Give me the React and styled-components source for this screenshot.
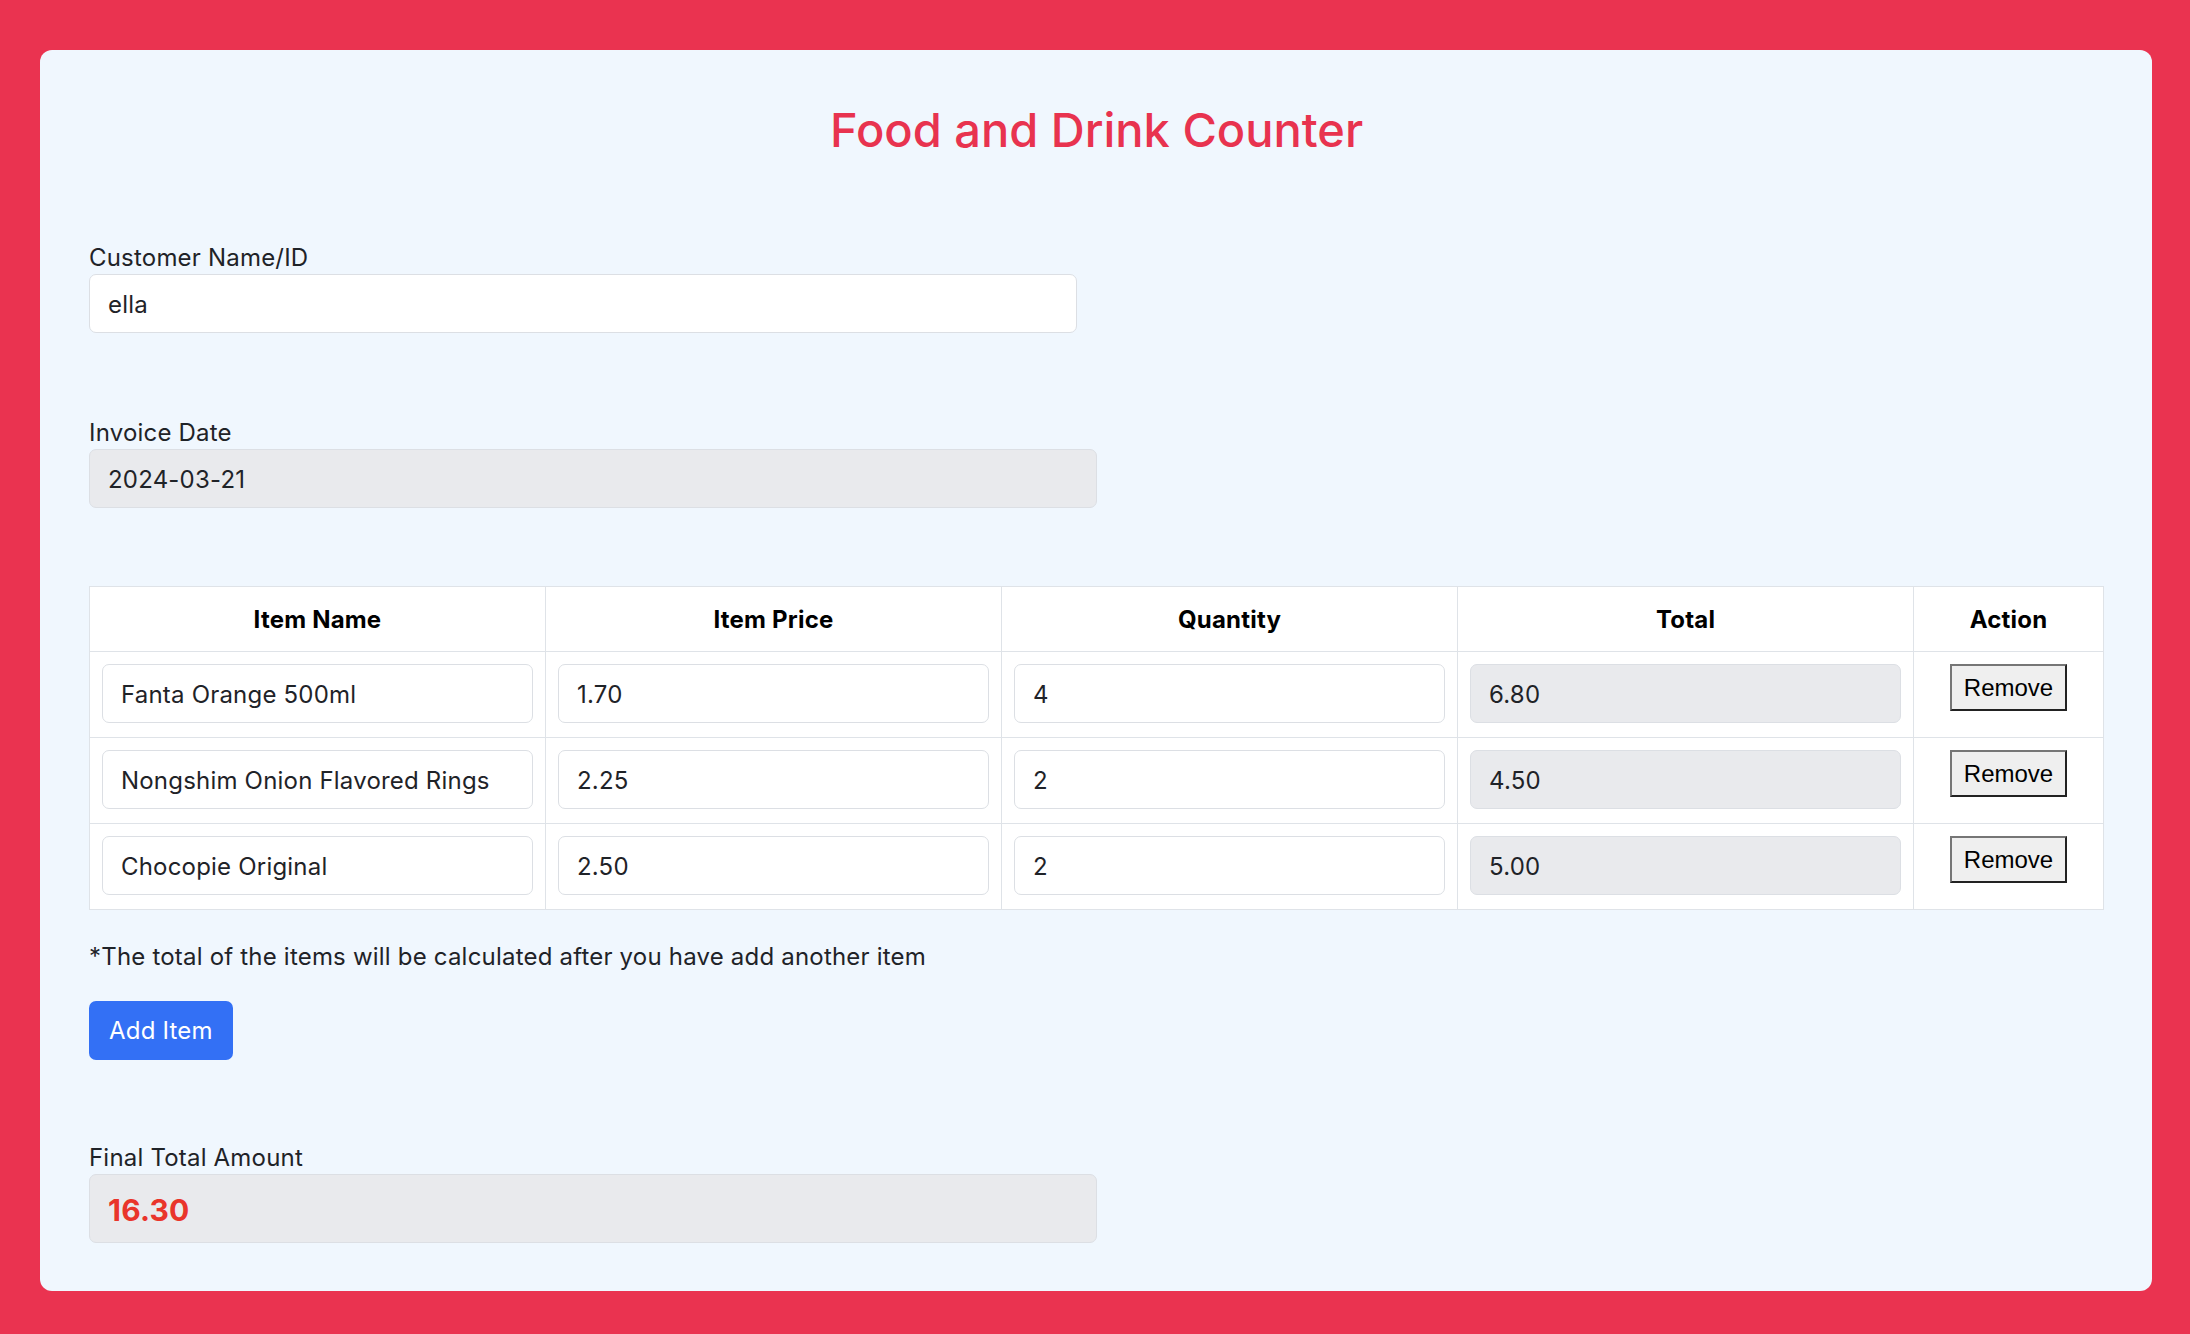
import React, { useState } from 'react'
import styled, { createGlobalStyle } from 'styled-components'

const GlobalStyle = createGlobalStyle`
  html, body {
    margin: 0;
    padding: 0;
    background: #EA3350;
  }
  body {
    font-family: Inter, "Noto Sans", "Liberation Sans", sans-serif;
    color: #1f2328;
  }
  * { box-sizing: border-box; }
`

const Page = styled.div`
  min-height: 1334px;
  padding: 50px 38px 43px 40px;
`

const Card = styled.div`
  background: #F0F7FE;
  border-radius: 12px;
  padding: 48px 48px 48px 49px;
`

const Title = styled.h1`
  margin: 0 0 79px;
  text-align: center;
  color: #E8334F;
  font-size: 47px;
  font-weight: 500;
  line-height: 64px;
`

const Field = styled.div`
  margin-bottom: ${p => p.gap || 0}px;
`

const Label = styled.label`
  display: block;
  font-size: 24px;
  letter-spacing: 0.2px;
  line-height: 33px;
  color: #1f2328;
`

const TextInput = styled.input`
  display: block;
  width: ${p => p.w || '100%'};
  height: ${p => (p.big ? 69 : 59)}px;
  padding: 2px 18px 0;
  border: 1px solid #dcdfe4;
  border-radius: 7px;
  background: ${p => (p.disabled ? '#e9eaed' : '#ffffff')};
  font-family: Inter, "Noto Sans", sans-serif;
  font-size: ${p => (p.big ? 30 : 24)}px;
  letter-spacing: 0.2px;
  font-weight: ${p => (p.big ? 700 : 400)};
  color: ${p => (p.big ? '#E9352B' : '#1f2328')};
  outline: none;
  &:disabled { opacity: 1; -webkit-text-fill-color: ${p => (p.big ? '#E9352B' : '#1f2328')}; }
`

const Table = styled.table`
  width: 100%;
  border-collapse: collapse;
  table-layout: fixed;
  background: #ffffff;
  margin-bottom: 30px;
`

const Th = styled.th`
  border: 1px solid #dfe3e8;
  height: 65px;
  font-size: 24px;
  letter-spacing: 0.2px;
  font-weight: 700;
  color: #000;
  text-align: center;
  width: ${p => p.w || 'auto'};
`

const Td = styled.td`
  border: 1px solid #dfe3e8;
  padding: 12px;
  vertical-align: top;
  text-align: ${p => p.align || 'left'};
  height: 86px;
`

const RemoveButton = styled.button`
  height: 47px;
  padding: 0 12px;
  font-family: "Liberation Sans", Arial, sans-serif;
  font-size: 24px;
  color: #000;
  background: #efefef;
  border: 2px solid;
  border-color: #767676 #222 #222 #767676;
  cursor: pointer;
`

const Note = styled.p`
  margin: 0 0 28px;
  font-size: 24px;
  letter-spacing: 0.2px;
  line-height: 33px;
`

const AddButton = styled.button`
  height: 59px;
  padding: 0 20px;
  background: #3370F5;
  color: #fff;
  border: none;
  border-radius: 7px;
  font-family: Inter, "Noto Sans", sans-serif;
  font-size: 24px;
  letter-spacing: 0.2px;
  margin-bottom: 81px;
  cursor: pointer;
`

const initialItems = [
  { name: 'Fanta Orange 500ml', price: '1.70', qty: '4' },
  { name: 'Nongshim Onion Flavored Rings', price: '2.25', qty: '2' },
  { name: 'Chocopie Original', price: '2.50', qty: '2' },
]

export default function App() {
  const [customer, setCustomer] = useState('ella')
  const [items, setItems] = useState(initialItems)

  const update = (i, key, val) =>
    setItems(items.map((it, idx) => (idx === i ? { ...it, [key]: val } : it)))

  const lineTotal = it => (parseFloat(it.price || 0) * parseFloat(it.qty || 0)).toFixed(2)
  const finalTotal = items.reduce((s, it) => s + parseFloat(lineTotal(it)), 0).toFixed(2)

  return (
    <Page>
      <GlobalStyle />
      <Card>
        <Title>Food and Drink Counter</Title>

        <Field gap={83}>
          <Label>Customer Name/ID</Label>
          <TextInput w="49.05%" value={customer} onChange={e => setCustomer(e.target.value)} />
        </Field>

        <Field gap={78}>
          <Label>Invoice Date</Label>
          <TextInput w="50%" value="2024-03-21" disabled readOnly />
        </Field>

        <Table>
          <thead>
            <tr>
              <Th>Item Name</Th>
              <Th>Item Price</Th>
              <Th>Quantity</Th>
              <Th>Total</Th>
              <Th w="190px">Action</Th>
            </tr>
          </thead>
          <tbody>
            {items.map((it, i) => (
              <tr key={i}>
                <Td><TextInput value={it.name} onChange={e => update(i, 'name', e.target.value)} /></Td>
                <Td><TextInput value={it.price} onChange={e => update(i, 'price', e.target.value)} /></Td>
                <Td><TextInput value={it.qty} onChange={e => update(i, 'qty', e.target.value)} /></Td>
                <Td><TextInput value={lineTotal(it)} disabled readOnly /></Td>
                <Td align="center">
                  <RemoveButton onClick={() => setItems(items.filter((_, idx) => idx !== i))}>Remove</RemoveButton>
                </Td>
              </tr>
            ))}
          </tbody>
        </Table>

        <Note>*The total of the items will be calculated after you have add another item</Note>
        <AddButton onClick={() => setItems([...items, { name: '', price: '', qty: '' }])}>Add Item</AddButton>

        <Field>
          <Label>Final Total Amount</Label>
          <TextInput big w="50%" value={finalTotal} disabled readOnly />
        </Field>
      </Card>
    </Page>
  )
}
